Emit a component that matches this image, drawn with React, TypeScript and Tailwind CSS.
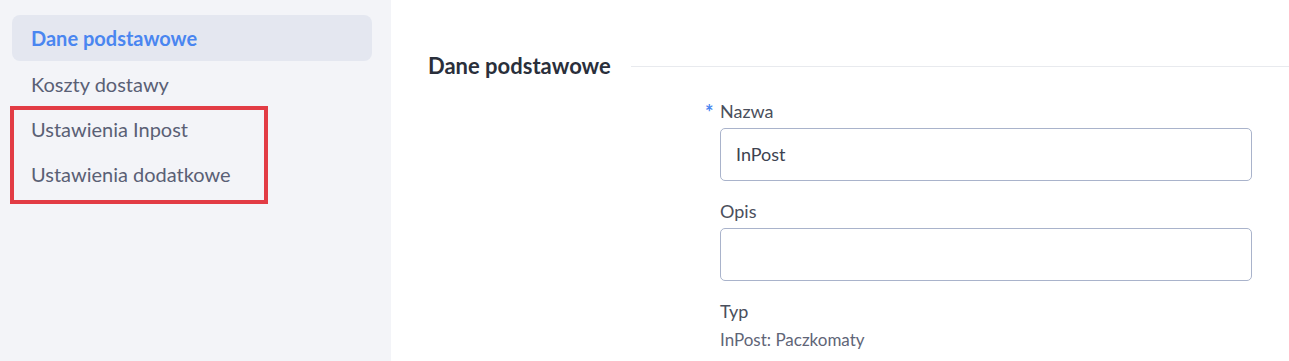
import { useState } from "react";

const menuItems = ["Dane podstawowe", "Koszty dostawy", "Ustawienia Inpost", "Ustawienia dodatkowe"];

function Sidebar() {
  const [active, setActive] = useState(0);

  return (
    <aside className="relative w-[391px] shrink-0 bg-[#f3f4f8] pt-[15px] pl-[12px] pr-[19px] pb-5">
      <nav className="flex flex-col">
        {menuItems.map((item, i) => (
          <button
            key={item}
            onClick={() => setActive(i)}
            className={
              i === active
                ? "h-[46px] rounded-[8px] bg-[#e4e7f0] pl-[19px] text-left text-[20px] font-bold text-[#4a86f0]"
                : "h-[45px] rounded-[8px] pl-[19px] text-left text-[20px] text-[#5a6075]"
            }
          >
            {item}
          </button>
        ))}
      </nav>
      {/* highlight frame drawn over the two last entries */}
      <div className="pointer-events-none absolute left-[10px] top-[106px] h-[98px] w-[258px] border-4 border-[#e23c45]" />
    </aside>
  );
}

function Field({ label, required, value }: { label: string; required?: boolean; value?: string }) {
  return (
    <div className="flex flex-col">
      <label className="relative mb-[6px] text-[18px] leading-[22px] text-[#4a4f5c]">
        {required && <span className="absolute -left-[15px] top-[1px] text-[20px] font-bold text-[#4a86f0]">*</span>}
        {label}
      </label>
      <div className="flex h-[53px] w-[532px] items-center rounded-[5px] border border-[#a9b3cb] bg-white pl-[15px] text-[18px] text-[#3d4250]">
        {value}
      </div>
    </div>
  );
}

export default function App() {
  return (
    <div className="flex h-[361px] w-[1289px] overflow-hidden bg-white font-['Lato','Noto_Sans',sans-serif]">
      <Sidebar />
      <main className="flex-1 pt-[52px]">
        <div className="flex items-center pl-[37px]">
          <h2 className="text-[22px] font-bold leading-[28px] text-[#2a2f3b]">Dane podstawowe</h2>
          <div className="ml-[20px] h-px flex-1 bg-[#e8eaee]" />
        </div>
        <div className="ml-[329px] mt-[20px] flex flex-col gap-[19px]">
          <Field label="Nazwa" required value="InPost" />
          <Field label="Opis" />
          <div className="flex flex-col">
            <span className="text-[18px] leading-[22px] text-[#4a4f5c]">Typ</span>
            <span className="mt-[8px] text-[17px] leading-[20px] text-[#5f6577]">InPost: Paczkomaty</span>
          </div>
        </div>
      </main>
    </div>
  );
}
